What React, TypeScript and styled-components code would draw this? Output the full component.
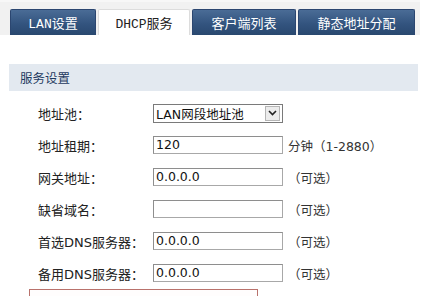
import React from 'react';
import styled, { createGlobalStyle } from 'styled-components';

const GlobalStyle = createGlobalStyle`
  body {
    margin: 0;
    background: #fff;
    font-family: "DejaVu Sans", "Noto Sans CJK SC", sans-serif;
  }
`;

const Page = styled.div`
  width: 430px;
  height: 296px;
  overflow: hidden;
`;

const TabBar = styled.div`
  width: 420px;
  height: 35px;
  box-sizing: border-box;
  padding: 9px 0 0 10px;
  background: #f1f1f1;
  border-top: 2px solid #f7f7f7;
  display: flex;
  align-items: flex-end;
  gap: 2px;
`;

const Tab = styled.div<{ $active?: boolean; $w: number }>`
  width: ${(p) => p.$w}px;
  height: 26px;
  box-sizing: border-box;
  display: flex;
  align-items: center;
  justify-content: center;
  font-family: "Liberation Mono", "Noto Sans CJK SC", monospace;
  font-size: 13px;
  border-radius: 2px 2px 0 0;
  color: ${(p) => (p.$active ? '#222' : '#fff')};
  background: ${(p) =>
    p.$active ? '#fff' : 'linear-gradient(#4a6c96, #33547f 55%, #29486f)'};
  border: 1px solid ${(p) => (p.$active ? '#dcdcdc' : '#2b4670')};
  border-bottom: none;
`;

const SectionTitle = styled.div`
  margin: 29px 0 6px 9px;
  width: 409px;
  height: 27px;
  box-sizing: border-box;
  padding-left: 11px;
  background: #e3e9f0;
  color: #1e3a60;
  font-family: "Noto Sans CJK SC", sans-serif;
  font-size: 12.5px;
  display: flex;
  align-items: center;
`;

const Row = styled.div`
  height: 32px;
  display: grid;
  grid-template-columns: 38px 115px 130px auto;
  align-items: center;
`;

const Label = styled.span`
  grid-column: 2;
  font-family: "DejaVu Sans", "Noto Sans CJK SC", sans-serif;
  font-size: 13px;
  color: #222;
`;

const Input = styled.div`
  height: 18px;
  box-sizing: border-box;
  border: 1px solid #a8a8a8;
  border-top-color: #8e8e8e;
  border-left-color: #8e8e8e;
  padding-left: 2px;
  font-family: "DejaVu Sans", sans-serif;
  font-size: 12.5px;
  line-height: 16px;
  color: #111;
`;

const Select = styled.div`
  height: 19px;
  box-sizing: border-box;
  border: 1px solid #7a7a7a;
  display: flex;
  align-items: center;
  padding: 0 2px;
  font-family: "DejaVu Sans", "Noto Sans CJK SC", sans-serif;
  font-size: 12.5px;
  color: #111;
`;

const SelectText = styled.span`
  flex: 1;
`;

const SelectButton = styled.span`
  width: 15px;
  height: 15px;
  box-sizing: border-box;
  border: 1px solid #b5b5b5;
  background: #ececec;
  display: flex;
  align-items: center;
  justify-content: center;
`;

const Hint = styled.span`
  padding-left: 5px;
  font-family: "DejaVu Sans", "Noto Sans CJK SC", sans-serif;
  font-size: 12.5px;
  color: #333;
  white-space: nowrap;
`;

const Notice = styled.div`
  margin-left: 29px;
  width: 229px;
  height: 30px;
  box-sizing: border-box;
  border: 1px solid #b9726c;
  background: #fffdfd;
`;

const fields: { label: string; value: string; hint: string }[] = [
  { label: '地址租期：', value: '120', hint: '分钟（1-2880）' },
  { label: '网关地址：', value: '0.0.0.0', hint: '（可选）' },
  { label: '缺省域名：', value: '', hint: '（可选）' },
  { label: '首选DNS服务器：', value: '0.0.0.0', hint: '（可选）' },
  { label: '备用DNS服务器：', value: '0.0.0.0', hint: '（可选）' },
];

const App = () => {
  return (
    <Page>
      <GlobalStyle />
      <TabBar>
        <Tab $w={86}>LAN设置</Tab>
        <Tab $w={92} $active>DHCP服务</Tab>
        <Tab $w={104}>客户端列表</Tab>
        <Tab $w={117}>静态地址分配</Tab>
      </TabBar>

      <SectionTitle>服务设置</SectionTitle>

      <Row>
        <Label>地址池：</Label>
        <Select>
          <SelectText>LAN网段地址池</SelectText>
          <SelectButton>
            <svg width="9" height="6" viewBox="0 0 9 6">
              <path d="M1 1 L4.5 4.5 L8 1" stroke="#222" strokeWidth="1.6" fill="none" />
            </svg>
          </SelectButton>
        </Select>
      </Row>

      {fields.map((f) => (
        <Row key={f.label}>
          <Label>{f.label}</Label>
          <Input>{f.value}</Input>
          <Hint>{f.hint}</Hint>
        </Row>
      ))}

      <Notice />
    </Page>
  );
};

export default App;
